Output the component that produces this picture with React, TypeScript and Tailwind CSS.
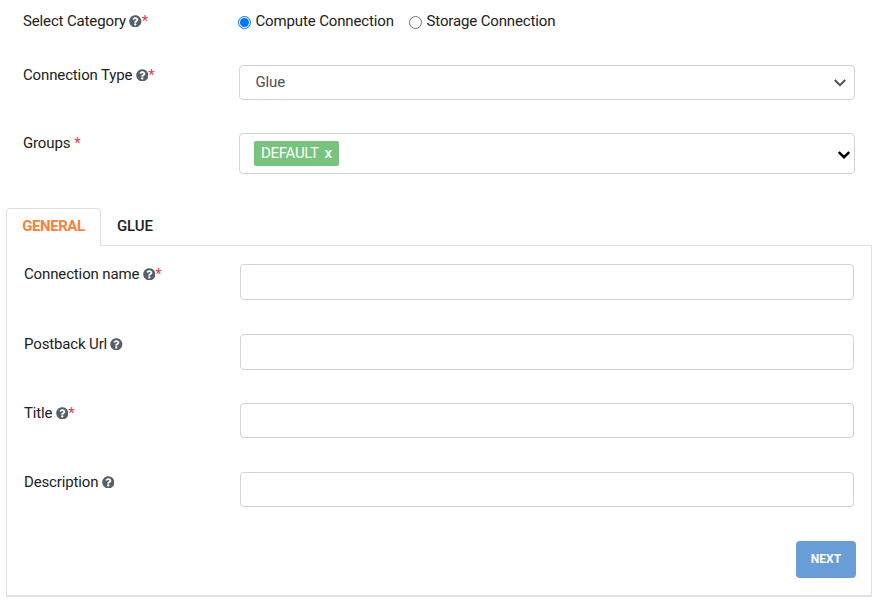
import { FaQuestionCircle } from "react-icons/fa";

function Label({ text, help = true, required = false }: { text: string; help?: boolean; required?: boolean }) {
  return (
    <div className="flex h-5 items-center whitespace-nowrap">
      <span>{text}</span>
      {help && <FaQuestionCircle className="ml-[3.3px] size-[12.6px] text-[#56606b]" />}
      {required && <span className={`text-[#e63950] ${help ? "" : "ml-1"}`}>*</span>}
    </div>
  );
}

function Chevron({ className }: { className: string }) {
  return (
    <svg viewBox="0 0 12 8" className={className} fill="none" stroke="currentColor">
      <path d="M.8 1 6 6.2 11.2 1" />
    </svg>
  );
}

function Field({ label, required, className, box }: { label: string; required?: boolean; className: string; box: string }) {
  return (
    <div className={`flex ${className}`}>
      <div className="w-[216px]">
        <Label text={label} required={required} />
      </div>
      <input aria-label={label} className={`w-[614px] rounded-[4px] border border-[#ced4da] bg-white px-3 outline-none ${box}`} />
    </div>
  );
}

export default function App() {
  return (
    <div className="h-[606px] w-[882px] overflow-hidden bg-white font-['Roboto',sans-serif] text-[15px] leading-5 tracking-[-0.14px] text-[#212121]">
      <div className="flex h-[65px] pl-[23px] pt-[11px]">
        <div className="w-[215px]">
          <Label text="Select Category" required />
        </div>
        <div className="flex h-5 items-center whitespace-nowrap">
          <span className="mt-[3px] flex size-[13px] items-center justify-center rounded-full border border-[#0075ff]">
            <span className="size-[9px] rounded-full bg-[#0075ff]" />
          </span>
          <span className="ml-[4.5px] w-[153.5px]">Compute Connection</span>
          <span className="mt-[3px] size-[13px] rounded-full border border-[#767676]" />
          <span className="ml-[4.5px]">Storage Connection</span>
        </div>
      </div>
      <div className="flex h-[68px] pl-[23px]">
        <div className="w-[216px]">
          <Label text="Connection Type" required />
        </div>
        <div className="flex h-[35px] w-[616px] items-center justify-between rounded-[4px] border border-[#ced4da] pl-[15.5px] pr-2 text-[#495057]">
          <span className="pb-0.5">Glue</span>
          <Chevron className="h-2 w-3 stroke-2" />
        </div>
      </div>
      <div className="flex h-[75px] pl-[23px]">
        <div className="w-[216px]">
          <Label text="Groups" help={false} required />
        </div>
        <div className="flex h-[41px] w-[616px] items-center justify-between rounded-[4px] border border-[#ced4da] pl-[14px] pr-1">
          <span className="flex h-[25px] w-[85px] items-center justify-between rounded-[2px] bg-[#78c47e] px-[7px] pb-0.5 text-white">
            <span className="tracking-[-0.3px]">DEFAULT</span>
            <span className="font-medium">x</span>
          </span>
          <Chevron className="mt-[3px] h-2 w-3 stroke-[2.4] text-black" />
        </div>
      </div>
      <div className="flex h-[37px] pl-[6px] font-medium">
        <div className="z-10 flex h-[38px] w-[95px] items-center justify-center rounded-t-[4px] border border-b-0 border-[#dee2e6] bg-white pb-[3px] font-bold tracking-[-0.45px] text-[#fb8040]">GENERAL</div>
        <div className="flex h-9 items-center pl-4">GLUE</div>
      </div>
      <div className="ml-[6px] h-[352px] w-[866px] border border-b-2 border-[#dee2e6] pl-[17px] pt-[18px]">
        <Field label="Connection name" required className="h-[70px]" box="h-9" />
        <Field label="Postback Url" className="h-[69px]" box="h-9" />
        <Field label="Title" required className="h-[69px]" box="h-[35px]" />
        <Field label="Description" className="h-[69px]" box="h-[35px]" />
        <div className="flex justify-end pr-[15px]">
          <button className="h-[37px] w-[60px] rounded-[4px] bg-[#699dd8] pb-0.5 text-xs font-bold tracking-normal text-white">NEXT</button>
        </div>
      </div>
    </div>
  );
}
